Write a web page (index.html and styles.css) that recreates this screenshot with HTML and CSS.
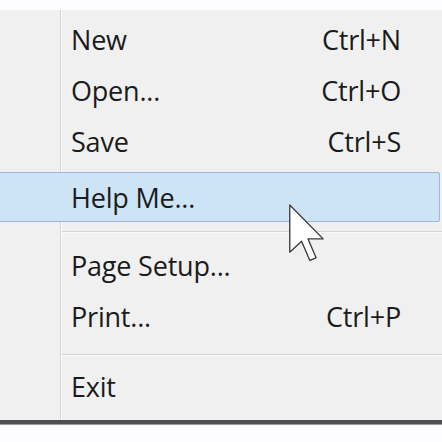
FILE: index.html
```html
<!DOCTYPE html>
<html>
<head>
<meta charset="utf-8">
<link rel="stylesheet" href="styles.css">
</head>
<body>
<div class="menu">
  <div class="item"><span class="label">New</span><span class="key">Ctrl+N</span></div>
  <div class="item"><span class="label">Open...</span><span class="key">Ctrl+O</span></div>
  <div class="item"><span class="label">Save</span><span class="key">Ctrl+S</span></div>
  <div class="item hover"><span class="label">Help Me...</span><span class="key"></span></div>
  <div class="sep"></div>
  <div class="item"><span class="label">Page Setup...</span><span class="key"></span></div>
  <div class="item"><span class="label">Print...</span><span class="key">Ctrl+P</span></div>
  <div class="sep sep2"></div>
  <div class="item"><span class="label">Exit</span><span class="key"></span></div>
  <svg class="cursor" width="40" height="62" viewBox="-1 -1 13 21">
    <path d="M0,0 L0,16 L4,12.3 L6.8,18.8 L8.9,17.9 L6.2,11.5 L11.3,11.5 Z" fill="#fff" stroke="#3a3a3a" stroke-width="0.45" stroke-linejoin="round"/>
  </svg>
</div>
<div class="below"></div>
</body>
</html>
```
FILE: styles.css
```css
html, body {
  margin: 0;
  padding: 0;
  background: #fdfcfe;
  width: 442px;
  height: 442px;
  overflow: hidden;
}
.menu {
  position: relative;
  margin-top: 10px;
  height: 414px;
  padding-top: 4px;
  box-sizing: border-box;
  background:
    linear-gradient(to right, transparent 60px, #d6d6d6 60px, #d6d6d6 61px, #fafafa 61px, #fafafa 62px, transparent 62px),
    #f0f0f0;
  border-bottom: 4px solid #4e4e4e;
  box-shadow: 0 1px 0 #9a9a9a;
  font-family: "Open Sans", "Noto Sans", sans-serif;
  font-size: 27px;
  font-weight: 500;
  color: #1b1b1b;
}
.item {
  height: 51px;
  display: flex;
  align-items: center;
  justify-content: space-between;
  padding-left: 71px;
  padding-right: 41px;
  box-sizing: border-box;
  letter-spacing: -0.2px;
}
.item.hover {
  margin: 5px 2px 0 -4px;
  height: 50px;
  padding-left: 74px;
  background: #cde3f6;
  border: 1px solid #9db8d6;
  border-radius: 2px;
}
.sep {
  height: 18px;
  margin-left: 62px;
  background: linear-gradient(to bottom, transparent 9px, #d4d4d4 9px, #d4d4d4 10px, #fbfbfb 10px, #fbfbfb 11px, transparent 11px);
}
.sep2 {
  height: 19px;
  background: linear-gradient(to bottom, transparent 12px, #d4d4d4 12px, #d4d4d4 13px, #fbfbfb 13px, #fbfbfb 14px, transparent 14px);
}
.cursor {
  position: absolute;
  left: 286px;
  top: 192px;
}
.below {
  height: 18px;
}
```
